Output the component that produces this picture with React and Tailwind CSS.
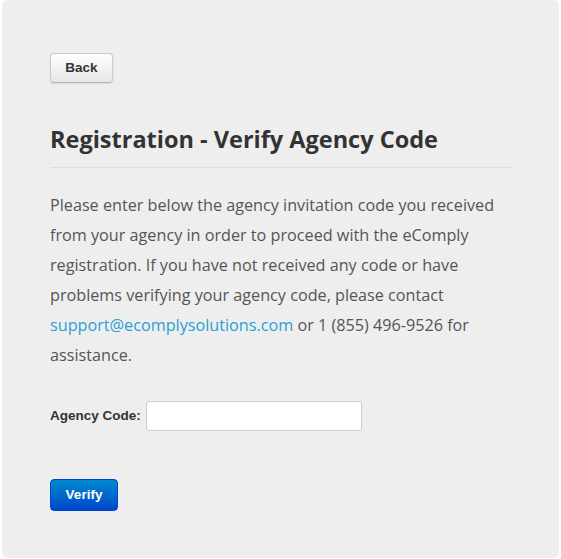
import React, { useState } from "react";

// Agency code verification step of the registration flow.
export default function App() {
  const [code, setCode] = useState("");

  return (
    <div className="min-h-[559px] bg-white px-[2px] pb-[1px]">
      <div className="min-h-[558px] rounded-[5px] bg-[#eeeeee] pl-[48px] pr-[47px] pt-[53px]">
        <button
          type="button"
          className="h-[30px] w-[63px] rounded-[4px] border border-[#cccccc] border-b-[#b3b3b3] bg-gradient-to-b from-white to-[#e6e6e6] text-[13.5px] font-bold text-[#333333] shadow-[inset_0_1px_0_rgba(255,255,255,0.2),0_1px_2px_rgba(0,0,0,0.1)] [font-family:'Liberation_Sans',Arial,sans-serif]"
        >
          Back
        </button>

        <h2 className="mt-[39px] border-b border-[#dddddd] pb-[11px] text-[23.5px] font-bold leading-[34px] text-[#333333] [font-family:'Open_Sans',sans-serif]">
          Registration - Verify Agency Code
        </h2>

        <p className="mt-[22px] text-[16.2px] leading-[30px] text-[#555555] [font-family:'Open_Sans',sans-serif]">
          Please enter below the agency invitation code you received
          <br />
          from your agency in order to proceed with the eComply
          <br />
          registration. If you have not received any code or have
          <br />
          problems verifying your agency code, please contact
          <br />
          <a href="#" className="text-[#2a9fd6]">
            support@ecomplysolutions.com
          </a>{" "}
          or 1 (855) 496-9526 for
          <br />
          assistance.
        </p>

        <div className="mt-[31px] flex items-center gap-[5px]">
          <label
            htmlFor="agency-code"
            className="text-[13.5px] font-bold text-[#333333] [font-family:'Liberation_Sans',Arial,sans-serif]"
          >
            Agency Code:
          </label>
          <input
            id="agency-code"
            value={code}
            onChange={(e) => setCode(e.target.value)}
            className="h-[30px] w-[216px] rounded-[3px] border border-[#cccccc] bg-white px-[6px] text-[14px] outline-none"
          />
        </div>

        <button
          type="button"
          className="mt-[48px] h-[32px] w-[68px] rounded-[4px] border border-[#0044cc] bg-gradient-to-b from-[#0088cc] to-[#0044cc] text-[13.5px] font-bold text-white [font-family:'Liberation_Sans',Arial,sans-serif]"
        >
          Verify
        </button>
      </div>
    </div>
  );
}
